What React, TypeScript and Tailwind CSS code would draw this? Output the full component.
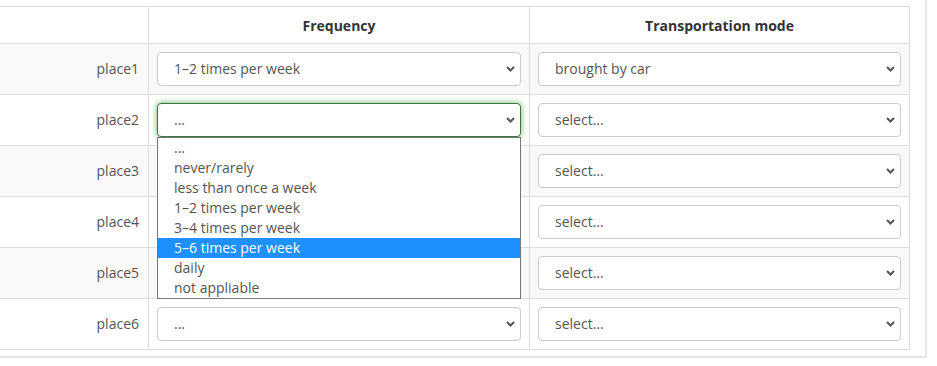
import { useState } from "react";

const FREQ = [
  "...",
  "never/rarely",
  "less than once a week",
  "1–2 times per week",
  "3–4 times per week",
  "5–6 times per week",
  "daily",
  "not appliable",
];

const MODES = ["select...", "brought by car", "walking", "by bike", "public transport"];

const ROWS = [
  { place: "place1", freq: "1–2 times per week", mode: "brought by car" },
  { place: "place2", freq: "...", mode: "select..." },
  { place: "place3", freq: "...", mode: "select..." },
  { place: "place4", freq: "...", mode: "select..." },
  { place: "place5", freq: "...", mode: "select..." },
  { place: "place6", freq: "...", mode: "select..." },
];

function Chevron() {
  return (
    <svg
      className="pointer-events-none absolute right-[6px] top-1/2 -translate-y-1/2"
      width="9"
      height="6"
      viewBox="0 0 9 6"
      fill="none"
    >
      <path d="M1 1l3.5 3.5L8 1" stroke="#555" strokeWidth="2" />
    </svg>
  );
}

function Select({ value, options, focused }: { value: string; options: string[]; focused?: boolean }) {
  return (
    <div className="relative">
      <select
        defaultValue={value}
        className={
          "block h-[34px] w-full appearance-none rounded-[4px] border bg-white pb-[2px] pl-[16px] pr-6 text-[14px] text-[#555] outline-none " +
          (focused ? "border-[#3c763d] shadow-[0_0_6px_#67b168]" : "border-[#ccc]")
        }
      >
        {options.map((o) => (
          <option key={o}>{o}</option>
        ))}
      </select>
      <Chevron />
    </div>
  );
}

export default function App() {
  const [hover] = useState(5);

  return (
    <div className="h-[366px] w-[937px] overflow-hidden bg-white font-['Open_Sans',sans-serif]">
      <div className="w-[927px] border-b-2 border-r-2 border-[#e6e6e6] bg-white pb-[6px] pr-[15px] pt-[6px]">
        <div className="border-t border-[#ddd]">
          <div className="flex h-[37px] border-b border-[#ddd] text-[14px] font-bold text-[#333]">
            <div className="w-[149px] border-r border-[#ddd]" />
            <div className="flex w-[381px] items-center justify-center border-r border-[#ddd]">Frequency</div>
            <div className="flex w-[380px] items-center justify-center border-r border-[#ddd]">Transportation mode</div>
          </div>

          {ROWS.map((r, i) => (
            <div
              key={r.place}
              className={"flex h-[51px] border-b border-[#ddd] " + (i % 2 === 0 ? "bg-[#f9f9f9]" : "bg-white")}
            >
              <div className="flex w-[149px] items-center justify-end border-r border-[#ddd] pb-[2px] pr-[9px] text-[14px] text-[#555]">
                {r.place}
              </div>
              <div className="relative w-[381px] border-r border-[#ddd] p-2">
                <Select value={r.freq} options={FREQ} focused={i === 1} />
                {i === 1 && (
                  <ul className="absolute left-2 top-[42px] z-10 w-[364px] border border-[#767676] bg-white text-[14px] text-[#555]">
                    {FREQ.map((o, k) => (
                      <li
                        key={o}
                        className={
                          "h-[20px] pl-[16px] leading-[20px] " + (k === hover ? "bg-[#1e90ff] text-white" : "")
                        }
                      >
                        {o}
                      </li>
                    ))}
                  </ul>
                )}
              </div>
              <div className="w-[380px] border-r border-[#ddd] p-2">
                <Select value={r.mode} options={MODES} />
              </div>
            </div>
          ))}
        </div>
      </div>
    </div>
  );
}
